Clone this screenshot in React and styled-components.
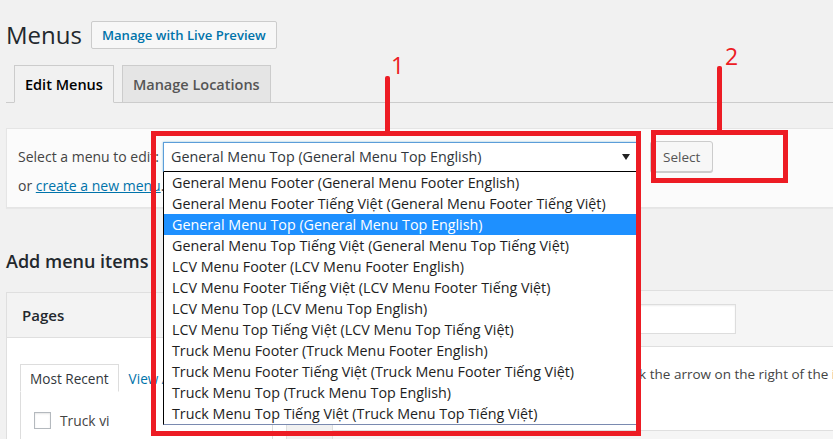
import React from "react";
import styled, { createGlobalStyle } from "styled-components";

const GlobalStyle = createGlobalStyle`
  html, body { margin: 0; padding: 0; }
  body {
    width: 833px;
    height: 439px;
    overflow: hidden;
    background: #f1f1f1;
    color: #444;
    font-family: "Open Sans", "Noto Sans", sans-serif;
    font-size: 13px;
  }
  * { box-sizing: border-box; }
`;

const Page = styled.div`
  position: relative;
  width: 833px;
  height: 439px;
  overflow: hidden;
`;

const Wrap = styled.div`
  padding: 21px 0 0 6px;
`;

/* ---------- title ---------- */
const TitleRow = styled.div`
  display: flex;
  align-items: center;
  gap: 9px;
  height: 28px;
`;

const Title = styled.h1`
  margin: 0;
  font-size: 24px;
  font-weight: 400;
  line-height: 28px;
  color: #23282d;
`;

const TitleAction = styled.a`
  display: inline-flex;
  align-items: center;
  height: 28px;
  padding: 0 10px;
  border: 1px solid #ccc;
  border-radius: 2px;
  background: #f7f7f7;
  color: #0073aa;
  font-size: 13.1px;
  font-weight: 600;
  text-decoration: none;
  white-space: nowrap;
`;

/* ---------- nav tabs ---------- */
const NavTabs = styled.div`
  display: flex;
  gap: 8px;
  margin-top: 16px;
  padding-left: 8px;
  border-bottom: 1px solid #ccc;
`;

const NavTab = styled.a`
  display: flex;
  align-items: center;
  height: 38px;
  margin-bottom: -1px;
  padding: 0 10px;
  border: 1px solid #ccc;
  border-bottom-color: ${(p) => (p.$active ? "#f1f1f1" : "#ccc")};
  background: ${(p) => (p.$active ? "#f1f1f1" : "#e5e5e5")};
  color: ${(p) => (p.$active ? "#000" : "#555")};
  font-size: 14.5px;
  font-weight: 600;
  text-decoration: none;
  white-space: nowrap;
`;

/* ---------- menu chooser panel ---------- */
const ChooserPanel = styled.div`
  margin: 25px -20px 0 0;
  padding: 12px 11px 11px;
  background: #fbfbfb;
  border: 1px solid #e5e5e5;
  box-shadow: 0 1px 1px rgba(0, 0, 0, 0.04);
`;

const ChooserRow = styled.div`
  display: flex;
  align-items: center;
  height: 31px;
`;

const ChooserLabel = styled.span`
  flex: none;
  width: 145px;
  overflow: hidden;
  white-space: nowrap;
  font-size: 14px;
  color: #444;
`;

const SelectWrap = styled.div`
  position: relative;
  flex: none;
  width: 474px;
`;

const SelectBox = styled.div`
  display: flex;
  align-items: center;
  justify-content: space-between;
  height: 30px;
  padding: 0 6px 0 7px;
  background: #fff;
  border: 1px solid #5b9dd9;
  border-bottom-color: #000;
  box-shadow: 0 0 2px rgba(30, 140, 190, 0.5);
  color: #32373c;
  font-size: 14.3px;
  white-space: nowrap;
`;

const Options = styled.ul`
  position: absolute;
  top: 100%;
  left: 0;
  z-index: 5;
  width: 100%;
  margin: 0;
  padding: 0;
  list-style: none;
  background: #fff;
  border: 1px solid #000;
  border-top: none;
  border-bottom-color: #7a8ab0;
`;

const Option = styled.li`
  height: 21px;
  padding-left: 8px;
  line-height: 21px;
  font-size: 14.3px;
  white-space: nowrap;
  color: ${(p) => (p.$selected ? "#fff" : "#1e1e1e")};
  background: ${(p) => (p.$selected ? "#1e90ff" : "#fff")};
`;

const SecondaryButton = styled.button`
  flex: none;
  height: 31px;
  margin-left: 13px;
  padding: 0 12px;
  background: #f7f7f7;
  border: 1px solid #ccc;
  border-radius: 3px;
  box-shadow: 0 1px 0 #ccc;
  color: #555;
  font-family: inherit;
  font-size: 13.5px;
`;

const ChooserNote = styled.div`
  margin-top: 4px;
  line-height: 20px;
  font-size: 14px;
  white-space: nowrap;
`;

const Link = styled.a`
  color: #0073aa;
  text-decoration: underline;
`;

/* ---------- lower columns ---------- */
const Columns = styled.div`
  display: flex;
  align-items: flex-start;
`;

const SideColumn = styled.div`
  flex: none;
  width: 281px;
`;

const SectionTitle = styled.h3`
  margin: 41px 0 19px;
  font-size: 18px;
  font-weight: 600;
  line-height: 24px;
  color: #23282d;
`;

const Accordion = styled.div`
  background: #fff;
  border: 1px solid #dfdfdf;
`;

const AccordionHead = styled.div`
  display: flex;
  align-items: center;
  height: 45px;
  padding-left: 15px;
  background: #f3f3f3;
  border-bottom: 1px solid #dfdfdf;
  color: #23282d;
  font-size: 15px;
  font-weight: 600;
`;

const AccordionBody = styled.div`
  padding: 26px 13px 20px;
`;

const MiniTabs = styled.div`
  display: flex;
  align-items: flex-end;
`;

const MiniTab = styled.span`
  display: flex;
  align-items: center;
  height: 28px;
  margin-bottom: -1px;
  padding: 0 9px;
  border: ${(p) => (p.$active ? "1px solid #ddd" : "1px solid transparent")};
  border-bottom: ${(p) => (p.$active ? "1px solid #fff" : "none")};
  background: #fff;
  color: ${(p) => (p.$active ? "#32373c" : "#0073aa")};
  font-size: 13.6px;
  white-space: nowrap;
`;

const TabsPanel = styled.div`
  display: flex;
  flex-direction: column;
  gap: 9px;
  padding: 19px 13px;
  border: 1px solid #ddd;
`;

const CheckRow = styled.label`
  display: flex;
  align-items: center;
  gap: 9px;
  font-size: 13.8px;
  color: #444;
`;

const CheckBox = styled.span`
  width: 17px;
  height: 17px;
  background: #fff;
  border: 1px solid #b4b9be;
  box-shadow: inset 0 1px 2px rgba(0, 0, 0, 0.1);
`;

const MainColumn = styled.div`
  flex: none;
  width: 700px;
  margin: 82px 0 0 45px;
  background: #fff;
  border: 1px solid #dfdfdf;
`;

const EditHeader = styled.div`
  display: flex;
  align-items: center;
  gap: 8px;
  height: 56px;
  padding: 0 10px;
  background: #f5f5f5;
  border-bottom: 1px solid #dfdfdf;
`;

const FieldLabel = styled.span`
  flex: none;
  width: 76px;
  white-space: nowrap;
`;

const TextInput = styled.div`
  width: 309px;
  height: 30px;
  background: #fff;
  border: 1px solid #ddd;
  box-shadow: inset 0 1px 2px rgba(0, 0, 0, 0.07);
`;

const EditBody = styled.div`
  height: 83px;
  padding: 17px 10px 0 22px;
  line-height: 20px;
  font-size: 13.5px;
  white-space: nowrap;
  color: #444;
`;

const EditFooter = styled.div`
  height: 40px;
  background: #f5f5f5;
  border-top: 1px solid #dfdfdf;
`;

/* ---------- red callouts drawn over the page ---------- */
const Frame = styled.div`
  position: absolute;
  z-index: 10;
  border: 5px solid #ed1c24;
  pointer-events: none;
`;

const Leader = styled.div`
  position: absolute;
  z-index: 10;
  width: 5px;
  background: #ed1c24;
  border-radius: 2px 2px 0 0;
`;

const Marker = styled.span`
  position: absolute;
  z-index: 10;
  color: #ed1c24;
  font-size: 23px;
  line-height: 23px;
`;

const menus = [
  "General Menu Footer (General Menu Footer English)",
  "General Menu Footer Tiếng Việt (General Menu Footer Tiếng Việt)",
  "General Menu Top (General Menu Top English)",
  "General Menu Top Tiếng Việt (General Menu Top Tiếng Việt)",
  "LCV Menu Footer (LCV Menu Footer English)",
  "LCV Menu Footer Tiếng Việt (LCV Menu Footer Tiếng Việt)",
  "LCV Menu Top (LCV Menu Top English)",
  "LCV Menu Top Tiếng Việt (LCV Menu Top Tiếng Việt)",
  "Truck Menu Footer (Truck Menu Footer English)",
  "Truck Menu Footer Tiếng Việt (Truck Menu Footer Tiếng Việt)",
  "Truck Menu Top (Truck Menu Top English)",
  "Truck Menu Top Tiếng Việt (Truck Menu Top Tiếng Việt)",
];

const selectedIndex = 2;

const Caret = () => (
  <svg width="8" height="6" viewBox="0 0 8 6" aria-hidden="true">
    <path d="M0 0h8L4 6z" fill="#222" />
  </svg>
);

export default function App() {
  return (
    <Page>
      <GlobalStyle />
      <Wrap>
        <TitleRow>
          <Title>Menus</Title>
          <TitleAction href="#">Manage with Live Preview</TitleAction>
        </TitleRow>

        <NavTabs>
          <NavTab href="#" $active>Edit Menus</NavTab>
          <NavTab href="#">Manage Locations</NavTab>
        </NavTabs>

        <ChooserPanel>
          <ChooserRow>
            <ChooserLabel>Select a menu to edit:</ChooserLabel>
            <SelectWrap>
              <SelectBox>
                <span>{menus[selectedIndex]}</span>
                <Caret />
              </SelectBox>
              <Options>
                {menus.map((m, i) => (
                  <Option key={m} $selected={i === selectedIndex}>{m}</Option>
                ))}
              </Options>
            </SelectWrap>
            <SecondaryButton>Select</SecondaryButton>
          </ChooserRow>
          <ChooserNote>
            or <Link href="#">create a new menu</Link>. Don’t forget to save your changes!
          </ChooserNote>
        </ChooserPanel>

        <Columns>
          <SideColumn>
            <SectionTitle>Add menu items</SectionTitle>
            <Accordion>
              <AccordionHead>Pages</AccordionHead>
              <AccordionBody>
                <MiniTabs>
                  <MiniTab $active>Most Recent</MiniTab>
                  <MiniTab>View All</MiniTab>
                  <MiniTab>Search</MiniTab>
                </MiniTabs>
                <TabsPanel>
                  <CheckRow><CheckBox />Truck vi</CheckRow>
                  <CheckRow><CheckBox />Truck en</CheckRow>
                </TabsPanel>
              </AccordionBody>
            </Accordion>
          </SideColumn>

          <MainColumn>
            <EditHeader>
              <FieldLabel>Menu Name</FieldLabel>
              <TextInput />
            </EditHeader>
            <EditBody>
              Drag each item into the order you prefer. Click the arrow on the right of the item to reveal additional configuration options.
            </EditBody>
            <EditFooter />
          </MainColumn>
        </Columns>
      </Wrap>

      <Frame style={{ left: 151, top: 131, width: 490, height: 305 }} />
      <Leader style={{ left: 385, top: 76, height: 57 }} />
      <Marker style={{ left: 391, top: 54 }}>1</Marker>

      <Frame style={{ left: 651, top: 130, width: 137, height: 53 }} />
      <Leader style={{ left: 717, top: 66, height: 66 }} />
      <Marker style={{ left: 725, top: 45 }}>2</Marker>
    </Page>
  );
}
